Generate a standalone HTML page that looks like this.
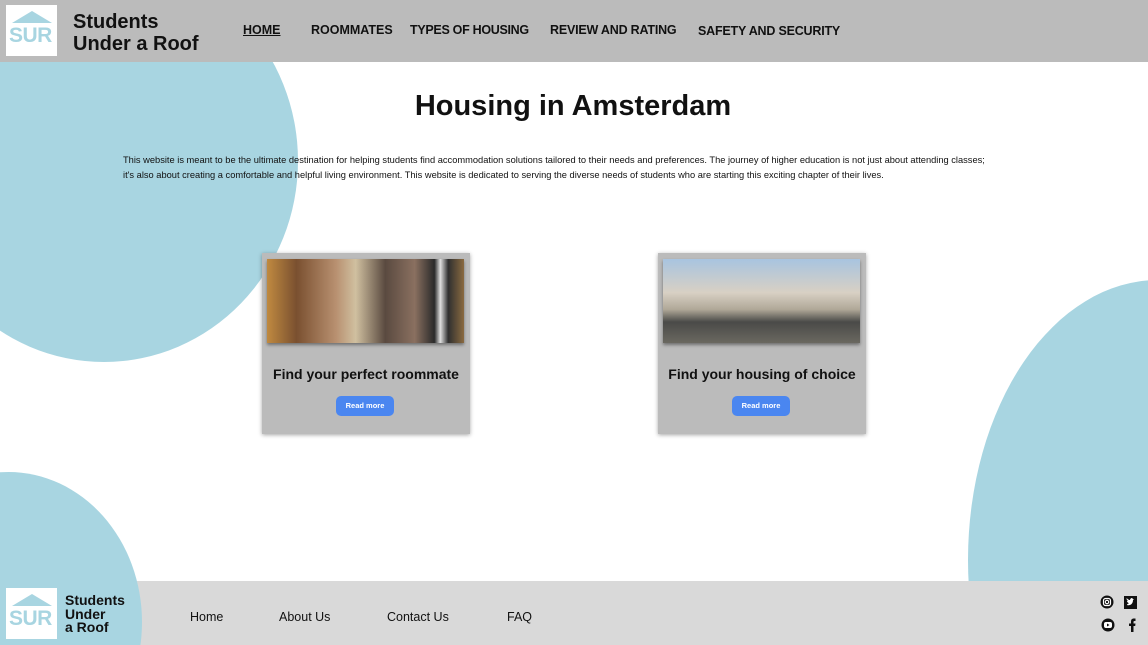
<!DOCTYPE html>
<html><head><meta charset="utf-8"><style>
*{margin:0;padding:0;box-sizing:border-box}
html,body{width:1148px;height:645px;overflow:hidden}
body{background:#fff;font-family:"Liberation Sans",sans-serif}
#w{position:relative;width:1148px;height:645px;overflow:hidden}
.blob{position:absolute;background:#a8d5e1;border-radius:50%}
header{position:absolute;left:0;top:0;width:1148px;height:62px;background:#bbbbbb;z-index:2}
.logo{position:absolute;background:#fff;width:51px;height:51px;z-index:4}
.logo .roof{position:absolute;left:6px;top:6px;width:0;height:0;border-left:20px solid transparent;border-right:20px solid transparent;border-bottom:12px solid #a8d5e1}
.logo .t{position:absolute;left:3px;top:19px;font-size:21px;font-weight:bold;color:#a8d5e1;letter-spacing:-0.5px}
.brand{position:absolute;font-weight:bold;color:#111;line-height:1;z-index:4}
nav a{position:absolute;top:23px;font-size:12.5px;font-weight:bold;color:#111;text-decoration:none;white-space:nowrap}
h1{position:absolute;top:90px;left:0;width:1146px;text-align:center;font-size:29px;font-weight:bold;color:#111}
p.intro{position:absolute;left:123px;top:153px;width:875px;font-size:9.3px;line-height:15px;color:#111}
.card{position:absolute;top:253px;width:208px;height:181px;background:#bbbbbb;box-shadow:0 1px 4px rgba(0,0,0,.35)}
.card .img{position:absolute;left:5px;top:6px;width:197px;height:84px;box-shadow:0 2px 3px rgba(0,0,0,.4)}
.card h3{position:absolute;top:113px;width:100%;text-align:center;font-size:14px;font-weight:bold;color:#111}
.card .btn{position:absolute;left:74px;top:143px;width:58px;height:20px;background:#4a86f0;border-radius:5px;color:#fff;font-size:7.5px;font-weight:bold;text-align:center;line-height:20px}
footer{position:absolute;left:0;top:581px;width:1148px;height:64px;background:#d9d9d9}
footer a{position:absolute;top:29px;font-size:12.5px;color:#111;text-decoration:none}
</style></head><body><div id="w">
<div class="blob" style="left:-90px;top:-40px;width:388px;height:402px"></div>
<div class="blob" style="left:968px;top:280px;width:380px;height:560px"></div>
<header>
<div class="logo" style="left:6px;top:5px"><div class="roof"></div><div class="t">SUR</div></div>
<div class="brand" style="left:73px;top:11px;font-size:20px;line-height:22px">Students<br>Under a Roof</div>
<nav>
<a style="left:243px;text-decoration:underline">HOME</a>
<a style="left:311px">ROOMMATES</a>
<a style="left:410px;letter-spacing:-0.3px">TYPES OF HOUSING</a>
<a style="left:550px;letter-spacing:-0.2px">REVIEW AND RATING</a>
<a style="left:698px;top:24px;letter-spacing:-0.2px">SAFETY AND SECURITY</a>
</nav>
</header>
<h1>Housing in Amsterdam</h1>
<p class="intro">This website is meant to be the ultimate destination for helping students find accommodation solutions tailored to their needs and preferences. The journey of higher education is not just about attending classes; it's also about creating a comfortable and helpful living environment. This website is dedicated to serving the diverse needs of students who are starting this exciting chapter of their lives.</p>
<div class="card" style="left:262px"><div class="img" style="background:linear-gradient(90deg,#c08a40 0,#7a5030 15%,#b89070 35%,#d0c0a0 45%,#5a4a40 60%,#8a7060 75%,#2a2a2a 85%,#e0e0e0 88%,#303030 92%,#8a6a40 100%)"></div><h3>Find your perfect roommate</h3><div class="btn">Read more</div></div>
<div class="card" style="left:658px"><div class="img" style="background:linear-gradient(180deg,#a8c4e0 0,#d8d0c4 40%,#b0a898 60%,#4a4a48 75%,#6a6860 100%)"></div><h3>Find your housing of choice</h3><div class="btn">Read more</div></div>
<footer>
<div class="blob" style="left:-125px;top:-109px;width:267px;height:300px;z-index:1"></div>
<div class="logo" style="left:6px;top:7px"><div class="roof"></div><div class="t">SUR</div></div>
<div class="brand" style="left:65px;top:13px;font-size:14px;line-height:13.5px">Students<br>Under<br>a Roof</div>
<a style="left:190px">Home</a><a style="left:279px">About Us</a><a style="left:387px">Contact Us</a><a style="left:507px">FAQ</a>
<svg style="position:absolute;left:1100px;top:14px" width="40" height="40" viewBox="0 0 40 40">
<circle cx="7" cy="7" r="6.5" fill="#111"/><rect x="3.5" y="3.5" width="7" height="7" rx="2" fill="none" stroke="#fff" stroke-width="1.2"/><circle cx="7" cy="7" r="1.7" fill="none" stroke="#fff" stroke-width="1.1"/>
<rect x="24" y="1" width="13" height="13" fill="#111"/><path d="M27 10c3 1 6-1 6-5l1-1-1 0-1-1c-1 0-2 1-2 2-1 0-3-1-3-2-1 1 0 2 1 3h-1c0 1 1 2 2 2-1 1-2 1-2 2z" fill="#fff"/>
<circle cx="8" cy="30" r="6.5" fill="#111"/><rect x="4" y="27" width="8" height="6" rx="2" fill="#fff"/><path d="M7 28.5v3l2.5-1.5z" fill="#111"/>
<path d="M31 37v-6h-2v-2.5h2v-2c0-2 1-3 3-3h1.5v2.5h-1c-.8 0-1 .4-1 1v1.5h2l-.3 2.5h-1.7v6z" fill="#111"/>
</svg>
</footer>
</div></body></html>
